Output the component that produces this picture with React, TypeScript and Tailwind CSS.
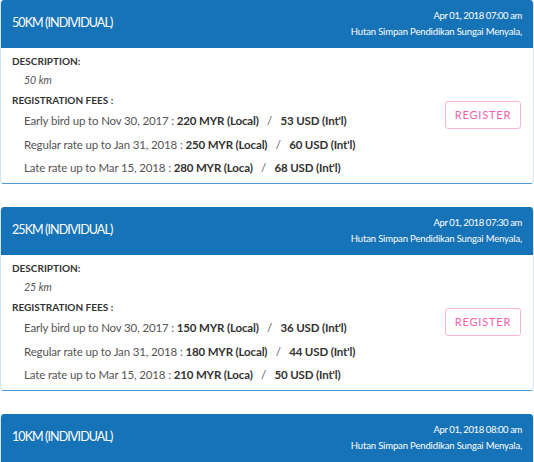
import React from "react";

type Fee = { label: string; local: string; intl: string };

type Race = {
  title: string;
  date: string;
  venue: string;
  description: string;
  fees: Fee[];
};

const races: Race[] = [
  {
    title: "50KM (INDIVIDUAL)",
    date: "Apr 01, 2018 07:00 am",
    venue: "Hutan Simpan Pendidikan Sungai Menyala,",
    description: "50 km",
    fees: [
      { label: "Early bird up to Nov 30, 2017", local: "220 MYR (Local)", intl: "53 USD (Int'l)" },
      { label: "Regular rate up to Jan 31, 2018", local: "250 MYR (Local)", intl: "60 USD (Int'l)" },
      { label: "Late rate up to Mar 15, 2018", local: "280 MYR (Loca)", intl: "68 USD (Int'l)" },
    ],
  },
  {
    title: "25KM (INDIVIDUAL)",
    date: "Apr 01, 2018 07:30 am",
    venue: "Hutan Simpan Pendidikan Sungai Menyala,",
    description: "25 km",
    fees: [
      { label: "Early bird up to Nov 30, 2017", local: "150 MYR (Local)", intl: "36 USD (Int'l)" },
      { label: "Regular rate up to Jan 31, 2018", local: "180 MYR (Local)", intl: "44 USD (Int'l)" },
      { label: "Late rate up to Mar 15, 2018", local: "210 MYR (Loca)", intl: "50 USD (Int'l)" },
    ],
  },
  {
    title: "10KM (INDIVIDUAL)",
    date: "Apr 01, 2018 08:00 am",
    venue: "Hutan Simpan Pendidikan Sungai Menyala,",
    description: "10 km",
    fees: [
      { label: "Early bird up to Nov 30, 2017", local: "100 MYR (Local)", intl: "24 USD (Int'l)" },
      { label: "Regular rate up to Jan 31, 2018", local: "120 MYR (Local)", intl: "29 USD (Int'l)" },
      { label: "Late rate up to Mar 15, 2018", local: "140 MYR (Loca)", intl: "34 USD (Int'l)" },
    ],
  },
];

function RaceCard({ race }: { race: Race }) {
  return (
    <div className="overflow-hidden rounded-[4px] border border-t-0 border-[#d3e4f2] border-b-[#4f9bd6]">
      <div className="flex h-[48px] items-center justify-between bg-[#1673b7] pl-[11px] pr-[11px] text-white">
        <span className="pb-[1px] text-[12.5px] tracking-[-0.9px]">{race.title}</span>
        <div className="flex flex-col items-end gap-[2px] text-[9.5px] leading-[14px] tracking-[-0.15px]">
          <span className="tracking-[-0.4px]">{race.date}</span>
          <span>{race.venue}</span>
        </div>
      </div>
      <div className="flex h-[135px] items-center justify-between bg-white pl-[11px] pr-[12px]">
        <div className="flex flex-col self-start pt-[5px]">
          <span className="text-[10px] leading-[16px] font-bold text-[#333]">
            DESCRIPTION:
          </span>
          <span className="mt-[3px] pl-[12px] text-[10.5px] leading-[16px] italic text-[#555]">
            {race.description}
          </span>
          <span className="mt-[4px] text-[10px] leading-[16px] font-bold text-[#333]">
            REGISTRATION FEES :
          </span>
          <div className="mt-[5px] flex flex-col gap-[7.5px] pl-[12px]">
            {race.fees.map((fee) => (
              <div
                key={fee.label}
                className="text-[11.5px] leading-[16px] tracking-[-0.15px] text-[#555]"
              >
                {fee.label} : <b className="text-[#333]">{fee.local}</b>
                {"\u00a0\u00a0\u00a0/\u00a0\u00a0\u00a0"}
                <b className="text-[#333]">{fee.intl}</b>
              </div>
            ))}
          </div>
        </div>
        <button
          type="button"
          className="mb-[1px] h-[28px] w-[76px] rounded-[3px] border border-[#f9b4d8] bg-white text-[11px] tracking-[0.8px] text-[#f25fab]"
        >
          REGISTER
        </button>
      </div>
    </div>
  );
}

export default function App() {
  return (
    <div
      className="flex w-[534px] flex-col gap-[23px] bg-white"
      style={{ fontFamily: "Lato, 'Noto Sans', sans-serif" }}
    >
      {races.map((race) => (
        <RaceCard key={race.title} race={race} />
      ))}
    </div>
  );
}
